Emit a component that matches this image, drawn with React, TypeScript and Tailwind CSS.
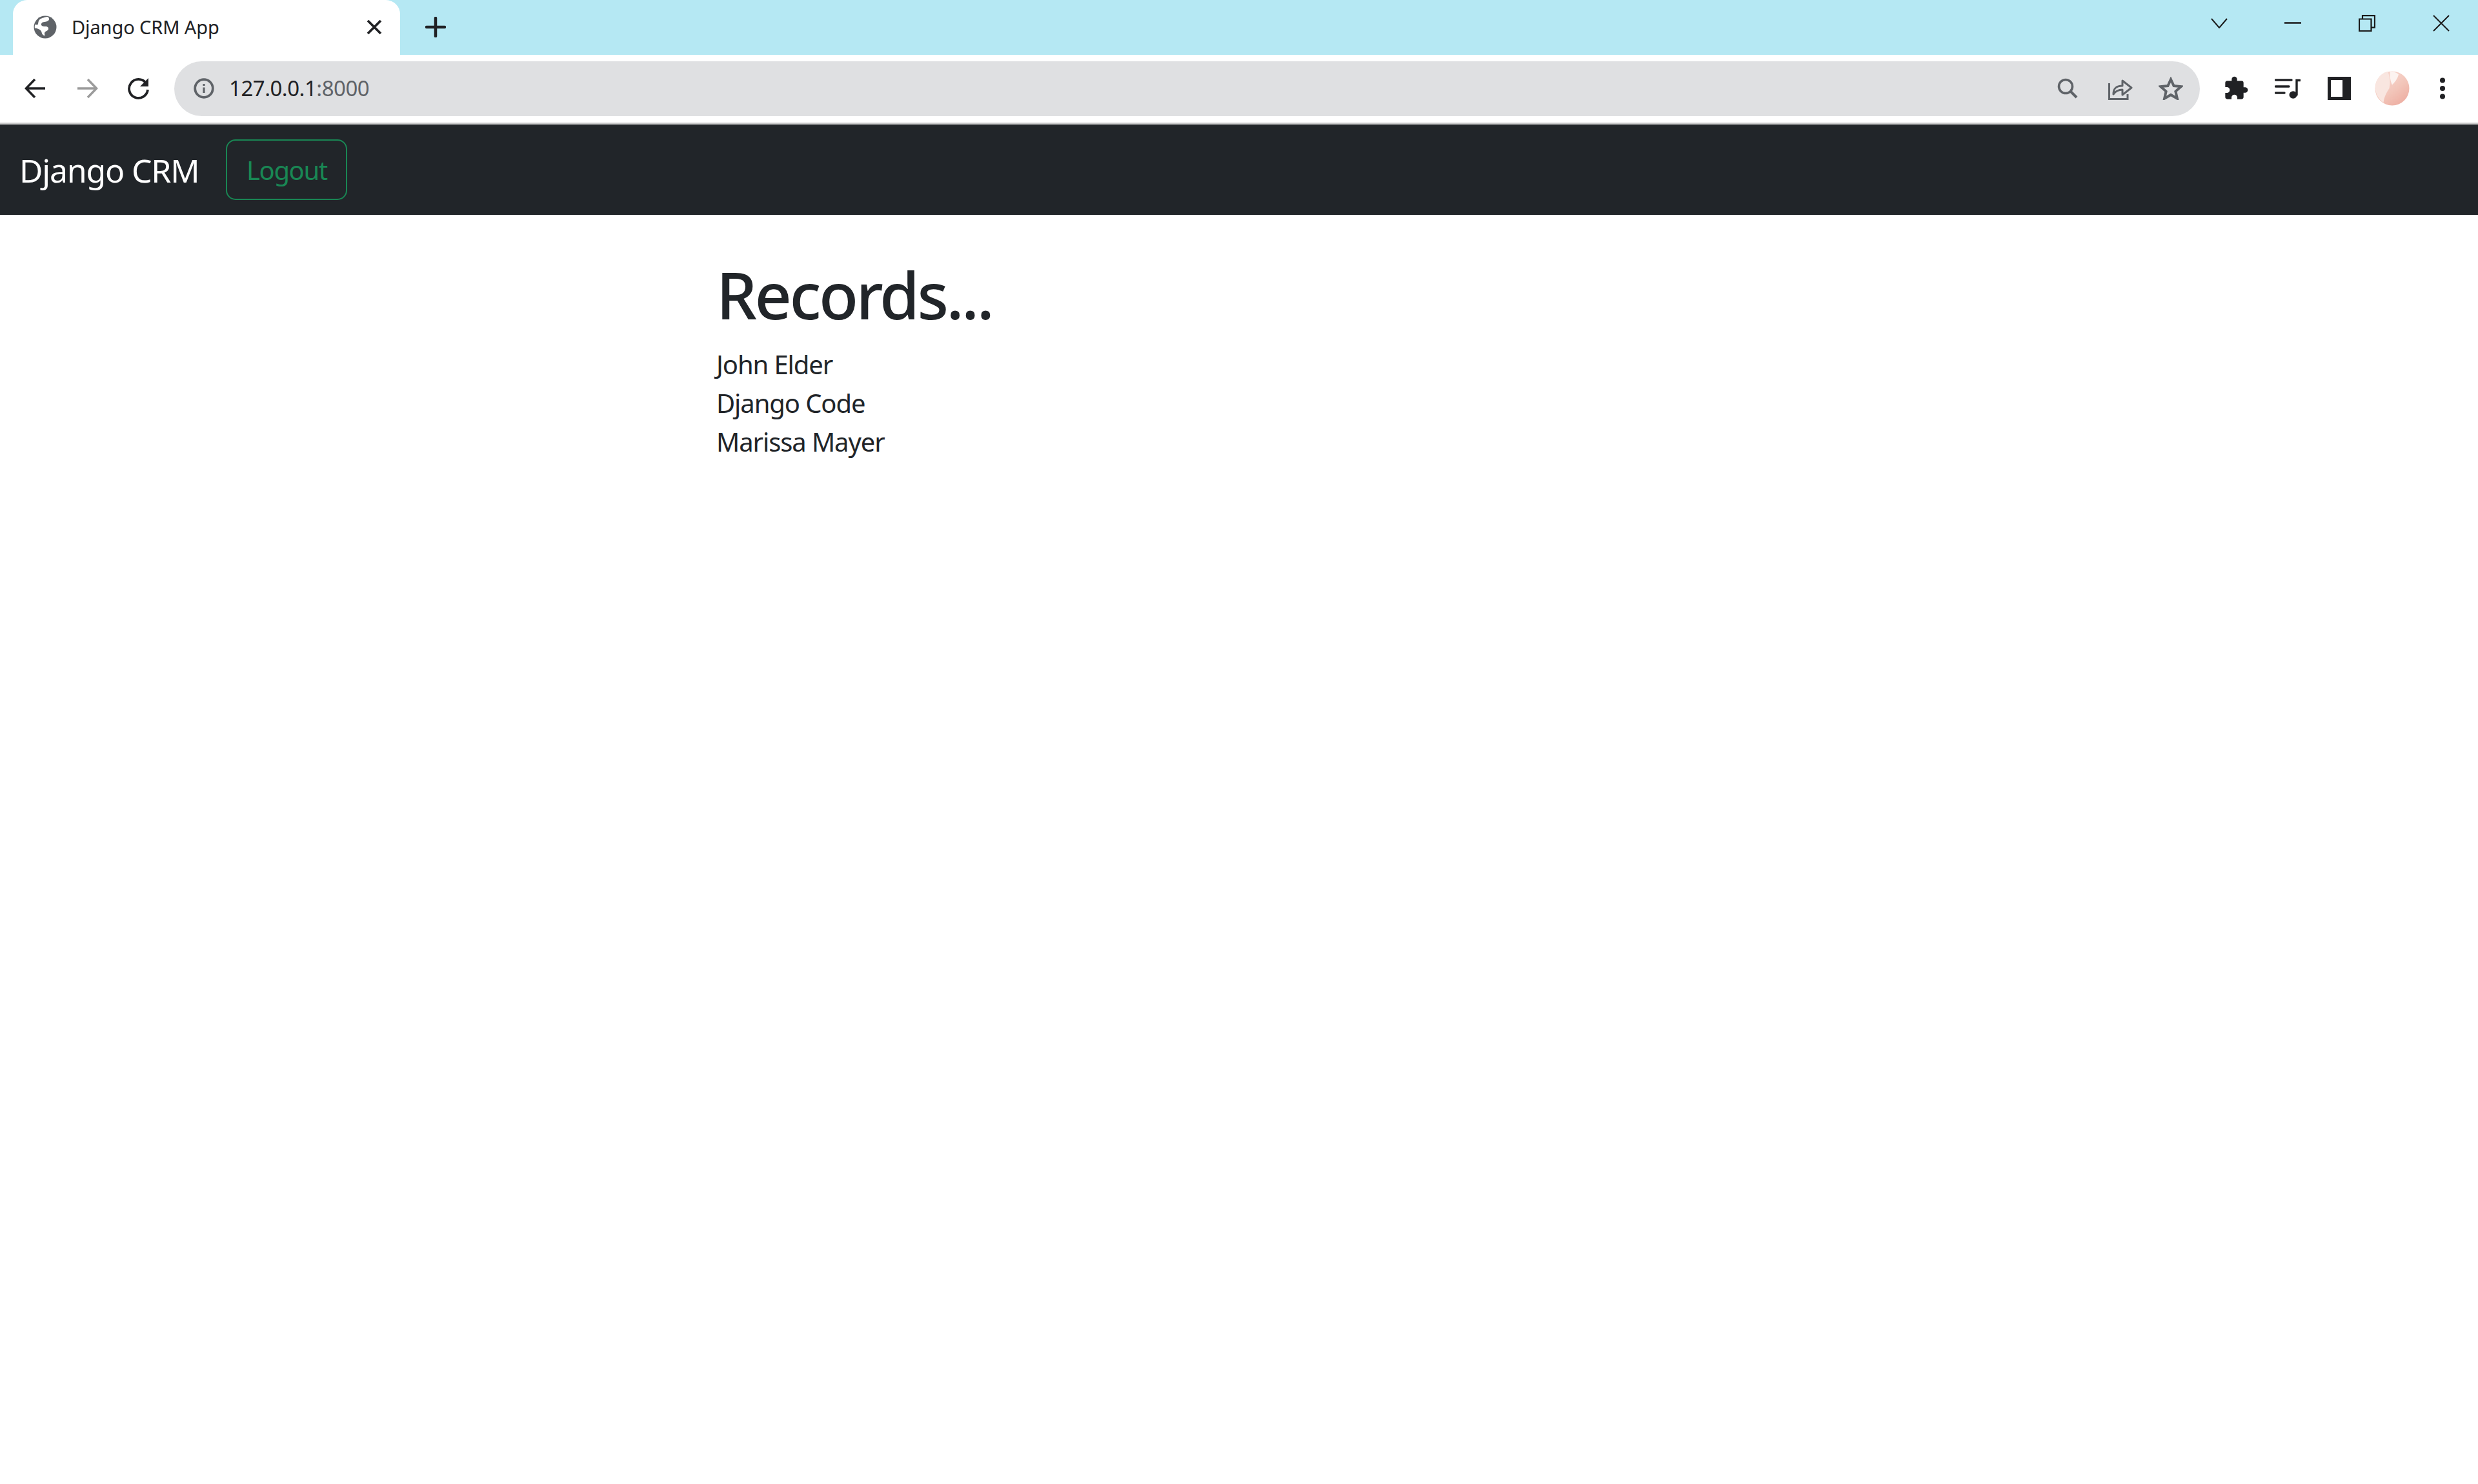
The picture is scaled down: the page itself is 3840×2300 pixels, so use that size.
import React from "react";

function Slot({ w, children }: { w: string; children: React.ReactNode }) {
  return <div className={`${w} flex items-center justify-center shrink-0`}>{children}</div>;
}

export default function App() {
  return (
    <div className="min-h-[2300px] w-[3840px] bg-white flex flex-col font-['Noto_Sans',sans-serif] text-[#212529]">
      {/* Title strip */}
      <div className="h-[85px] bg-[#b5e8f3] flex items-stretch shrink-0">
        <div className="ml-[20px] w-[600px] bg-white rounded-t-[22px] flex items-center pl-[32px] pr-[28px] pb-[1px]">
          <svg width="36" height="36" viewBox="0 0 36 36">
            <circle cx="18" cy="18" r="17.500" fill="#5f6368" />
            <path d="M23 3c2 2.500 1 5-2 6-3.500 1.200-8 .6-9 4-.8 3 2.500 4.200 6 4 3.500-.2 5.500 1.500 5 4-.5 2.600-4 3-5.500 5-1 1.500-.5 3.500.5 5-3 .5-5-2-5.500-5-.4-2.500-2.500-4-5-5-2-.8-4.500-1.500-5.500-1-.3-2-.3-4 .3-6 2 .2 3 1 4.200 0 1-1 .5-3 1.300-5 1-3.500 5-5 9-6 2-.6 4-1.200 6.200-1z" fill="#ffffff" />
          </svg>
          <span className="ml-[23px] text-[29px] tracking-[-0.1px] text-[#202124] whitespace-nowrap">Django CRM App</span>
          <svg className="ml-auto" width="24" height="24" viewBox="0 0 24 24">
            <path d="M2 2l20 20M22 2L2 22" stroke="#202124" strokeWidth="3.800" />
          </svg>
        </div>
        <div className="ml-[39px] flex items-center pb-[1px]">
          <svg width="32" height="32" viewBox="0 0 32 32">
            <path d="M16 2v28M2 16h28" stroke="#202124" strokeWidth="4.500" strokeLinecap="round" />
          </svg>
        </div>
        <div className="ml-auto flex items-center pb-[14px]">
          <Slot w="w-[115px]">
            <svg className="ml-[3px]" width="26" height="16" viewBox="0 0 26 16"><path d="M1 1l12 14L25 1" fill="none" stroke="#1a1a1a" strokeWidth="2" /></svg>
          </Slot>
          <Slot w="w-[115px]">
            <svg width="26" height="3" viewBox="0 0 26 3"><path d="M0 1.500h26" stroke="#1a1a1a" strokeWidth="2.500" /></svg>
          </Slot>
          <Slot w="w-[115px]">
            <svg width="26" height="26" viewBox="0 0 26 26"><path d="M1 6.500h18.500V25H1zM6 6.500V1.200h19v18.500h-5.500" fill="none" stroke="#1a1a1a" strokeWidth="2.200" /></svg>
          </Slot>
          <Slot w="w-[115px]">
            <svg width="26" height="26" viewBox="0 0 26 26"><path d="M1 1l24 24M25 1L1 25" stroke="#1a1a1a" strokeWidth="2" /></svg>
          </Slot>
        </div>
      </div>

      {/* Toolbar */}
      <div className="h-[105px] flex items-center pl-[15px] pr-[15px] shrink-0 pb-[1px]">
        <Slot w="w-[80px]">
          <svg width="34" height="32" viewBox="0 0 34 32"><path d="M32 16H3M16 2L2.500 16 16 30" fill="none" stroke="#202124" strokeWidth="3.500" /></svg>
        </Slot>
        <Slot w="w-[80px]">
          <svg width="34" height="32" viewBox="0 0 34 32"><path d="M2 16h29M18 2l13.500 14L18 30" fill="none" stroke="#9b9b9b" strokeWidth="3.500" /></svg>
        </Slot>
        <Slot w="w-[80px]">
          <svg width="36" height="34" viewBox="0 0 36 34"><path d="M29 8.500A14.500 14.500 0 1 0 32 19" fill="none" stroke="#202124" strokeWidth="3.800" /><path d="M33 1v13H20z" fill="#202124" /></svg>
        </Slot>
        <div className="ml-[15px] flex-1 h-[85px] bg-[#dfe0e2] rounded-full flex items-center pl-[30px] pr-[5px]">
          <svg width="32" height="32" viewBox="0 0 32 32">
            <circle cx="16" cy="16" r="13.800" fill="none" stroke="#5f6368" strokeWidth="3.800" />
            <path d="M16 14.500v8.500M16 9v3" stroke="#5f6368" strokeWidth="3.200" />
          </svg>
          <span className="ml-[23px] text-[33px] tracking-[-0.5px] whitespace-nowrap text-[#202124]">
            127.0.0.1<span className="text-[#5f6368]">:8000</span>
          </span>
          <div className="ml-auto flex items-center">
            <Slot w="w-[80px]">
              <svg width="32" height="32" viewBox="0 0 32 32"><circle cx="13" cy="13" r="10.500" fill="none" stroke="#5f6368" strokeWidth="3.600" /><path d="M20.500 20.500L30 30" stroke="#5f6368" strokeWidth="4" /></svg>
            </Slot>
            <Slot w="w-[80px]">
              <svg className="ml-[4px]" width="38" height="36" viewBox="0 0 38 36"><path d="M1.500 10v24.500h28.500V27" fill="none" stroke="#5f6368" strokeWidth="3" /><path d="M8 27c0-8 3-13 14-13V6l14 11-14 11V20c-6 0-10 1.500-14 7z" fill="none" stroke="#5f6368" strokeWidth="3" strokeLinejoin="round" /></svg>
            </Slot>
            <Slot w="w-[80px]">
              <svg width="38" height="36" viewBox="0 0 38 36"><path d="M19 4l4.600 10 11.300 1.100-8.500 7.500 2.500 11.100-9.900-5.800-9.900 5.800 2.500-11.100-8.500-7.500 11.300-1.100z" fill="none" stroke="#5f6368" strokeWidth="4" /></svg>
            </Slot>
          </div>
        </div>
        <div className="ml-[16px] flex items-center">
          <Slot w="w-[80px]">
            <svg width="40" height="40" viewBox="0 0 24 24"><path d="M20.500 11H19V7a2 2 0 0 0-2-2h-4V3.500a2.500 2.500 0 0 0-5 0V5H4a2 2 0 0 0-2 2v3.800h1.500a2.700 2.700 0 0 1 0 5.400H2V20a2 2 0 0 0 2 2h3.800v-1.500a2.700 2.700 0 0 1 5.400 0V22H17a2 2 0 0 0 2-2v-4h1.500a2.500 2.500 0 0 0 0-5z" fill="#202124" /></svg>
          </Slot>
          <Slot w="w-[80px]">
            <svg width="40" height="32" viewBox="0 0 40 32"><path d="M1.500 3H26M1.500 13H22M1.500 23H15" stroke="#202124" strokeWidth="3.400" strokeLinecap="round" /><path d="M34 26V3.500h5" fill="none" stroke="#202124" strokeWidth="3.400" strokeLinecap="round" /><ellipse cx="28.500" cy="26" rx="6" ry="5.800" fill="#202124" /></svg>
          </Slot>
          <Slot w="w-[80px]">
            <svg width="36" height="36" viewBox="0 0 36 36"><path fillRule="evenodd" d="M0 0h36v36H0zM5 5v26h18V5z" fill="#202124" /></svg>
          </Slot>
          <Slot w="w-[80px]">
            <svg className="ml-[3px]" width="54" height="54" viewBox="0 0 54 54">
              <defs>
                <linearGradient id="av" x1="0.300" y1="0.200" x2="0.800" y2="0.900">
                  <stop offset="0" stopColor="#f6d3ca" />
                  <stop offset="0.500" stopColor="#f2c5b9" />
                  <stop offset="1" stopColor="#eeb0a4" />
                </linearGradient>
              </defs>
              <circle cx="27" cy="27" r="26.500" fill="url(#av)" />
              <path d="M20 .8C14 2 4 8 1.500 20c-2 11 2 22 12 29 1-9 5-16 9-22 2-9 1-18-2.500-26.200z" fill="#f9e6e0" />
              <path d="M24 .5c5 0 10 2 13 5-2 7-6 12-10 16-3-6-4-14-3-21z" fill="#fcf3f0" />
            </svg>
          </Slot>
          <Slot w="w-[80px]">
            <svg width="10" height="34" viewBox="0 0 10 34"><circle cx="5" cy="4.500" r="4" fill="#202124" /><circle cx="5" cy="17" r="4" fill="#202124" /><circle cx="5" cy="29.500" r="4" fill="#202124" /></svg>
          </Slot>
        </div>
      </div>
      <div className="h-[3px] bg-[#cacaca] shrink-0" />

      {/* Navbar */}
      <nav className="h-[140px] bg-[#212529] flex items-center pl-[30px] shrink-0">
        <a className="text-[50px] text-white tracking-[-1.2px] whitespace-nowrap mr-[42px] pt-[3px]">Django CRM</a>
        <button className="h-[94px] w-[188px] rounded-[15px] border-[2.500px] border-[#198754] text-[40px] text-[#198754] tracking-[-1.4px] pt-[2px] flex items-center justify-center">
          Logout
        </button>
      </nav>

      {/* Content */}
      <main className="pl-[1110px] pt-[63px]">
        <h1 className="text-[100px] leading-[120px] font-[550] mb-[19px] tracking-[-3.600px]">Records...</h1>
        <div className="text-[40px] leading-[60px] tracking-[-1.1px]">
          <div>John Elder</div>
          <div>Django Code</div>
          <div>Marissa Mayer</div>
        </div>
      </main>
    </div>
  );
}
